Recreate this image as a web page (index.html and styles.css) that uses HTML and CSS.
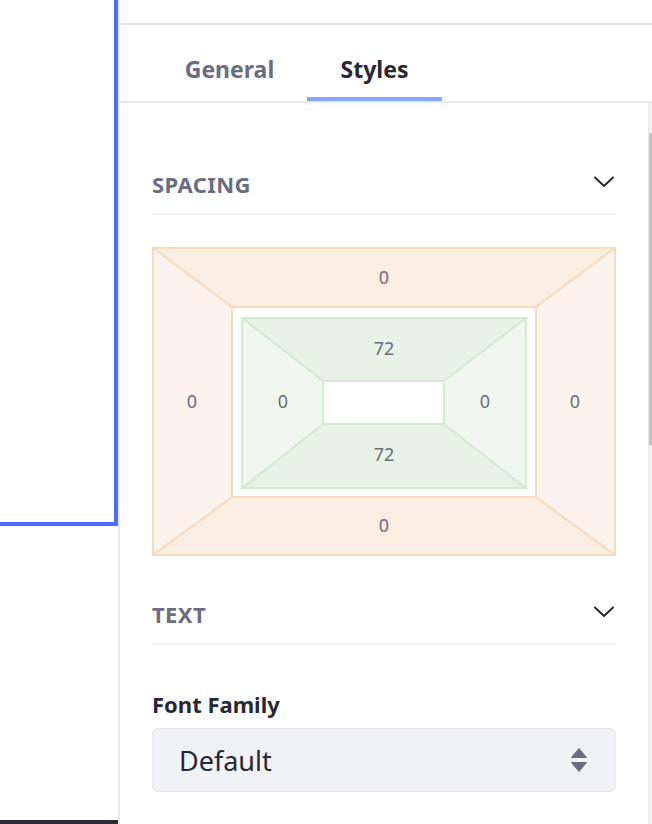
FILE: index.html
```html
<!DOCTYPE html>
<html lang="en">
  <head>
    <meta charset="UTF-8" />
    <meta name="viewport" content="width=device-width, initial-scale=1.0" />
    <title>Styles</title>
    <link rel="stylesheet" href="styles.css">
  </head>
  <body>
    <div class="page">
      <div class="canvas">
        <div class="selected-block"></div>
        <div class="canvas-bottom"></div>
      </div>
      <div class="sidebar">
        <div class="sidebar-top"></div>
        <div class="tabs">
          <div class="tab">General</div>
          <div class="tab active">Styles</div>
        </div>
        <div class="sidebar-body">
          <div class="content">
            <div class="section-head">
              <span>SPACING</span>
              <svg class="chevron" width="20" height="12" viewBox="0 0 20 12">
                <path d="M1 1.5 L10 10 L19 1.5" fill="none" stroke="#272833" stroke-width="2" stroke-linecap="round" stroke-linejoin="round"/>
              </svg>
            </div>

            <svg class="box-model" width="464" height="309" viewBox="0 0 464 309">
              <g stroke="#f4dcc1" stroke-width="2" stroke-linejoin="miter">
                <polygon points="1,1 463,1 384,60 80,60" fill="#faede1"/>
                <polygon points="1,308 463,308 384,250 80,250" fill="#faede1"/>
                <polygon points="1,1 80,60 80,250 1,308" fill="#fbf3ec"/>
                <polygon points="463,1 384,60 384,250 463,308" fill="#fbf3ec"/>
              </g>
              <g stroke="#d5ead3" stroke-width="2" stroke-linejoin="miter">
                <polygon points="90,71 374,71 292,134 171,134" fill="#e7f3e5"/>
                <polygon points="90,241 374,241 292,177 171,177" fill="#e7f3e5"/>
                <polygon points="90,71 171,134 171,177 90,241" fill="#f0f7ef"/>
                <polygon points="374,71 292,134 292,177 374,241" fill="#f0f7ef"/>
              </g>
              <g class="box-label" text-anchor="middle">
                <text x="232" y="37">0</text>
                <text x="232" y="108">72</text>
                <text x="40" y="161">0</text>
                <text x="131" y="161">0</text>
                <text x="333" y="161">0</text>
                <text x="423" y="161">0</text>
                <text x="232" y="214">72</text>
                <text x="232" y="285">0</text>
              </g>
            </svg>

            <div class="section-head text-head">
              <span>TEXT</span>
              <svg class="chevron" width="20" height="12" viewBox="0 0 20 12">
                <path d="M1 1.5 L10 10 L19 1.5" fill="none" stroke="#272833" stroke-width="2" stroke-linecap="round" stroke-linejoin="round"/>
              </svg>
            </div>

            <div class="field-label">Font Family</div>
            <div class="select">
              <span>Default</span>
              <svg width="16" height="24" viewBox="0 0 16 24">
                <path d="M8 0.5 L15.5 9.5 L0.5 9.5 Z" fill="#6b6c7e" stroke="#6b6c7e" stroke-linejoin="round"/>
                <path d="M8 23.5 L15.5 14.5 L0.5 14.5 Z" fill="#6b6c7e" stroke="#6b6c7e" stroke-linejoin="round"/>
              </svg>
            </div>
          </div>
          <div class="scrollbar">
            <div class="thumb"></div>
          </div>
        </div>
      </div>
    </div>
  </body>
</html>
```

FILE: styles.css
```css
body {
  margin: 0;
  font-family: "Noto Sans", "Open Sans", sans-serif;
  background: #fff;
  color: #272833;
}
.page {
  display: flex;
  width: 652px;
  height: 824px;
  overflow: hidden;
}
.canvas {
  width: 118px;
  flex-shrink: 0;
  display: flex;
  flex-direction: column;
  justify-content: space-between;
}
.selected-block {
  height: 522px;
  border-right: 4px solid #4b6bfb;
  border-bottom: 4px solid #4b6bfb;
}
.canvas-bottom {
  height: 4px;
  background: #2c2b36;
}
.sidebar {
  flex: 1;
  min-width: 0;
  border-left: 2px solid #e7e7ed;
  display: flex;
  flex-direction: column;
}
.sidebar-top {
  height: 23px;
  border-bottom: 2px solid #e7e7ed;
}
.tabs {
  display: flex;
  gap: 10px;
  height: 76px;
  padding-left: 42px;
  border-bottom: 2px solid #e7e7ed;
}
.tab {
  width: 135px;
  box-sizing: border-box;
  text-align: center;
  font-size: 23px;
  font-weight: 700;
  color: #6b6c7e;
  padding-top: 28px;
  border-bottom: 4px solid transparent;
}
.tab.active {
  color: #272833;
  border-bottom-color: #89a7f7;
}
.sidebar-body {
  flex: 1;
  display: flex;
}
.content {
  flex: 1;
  min-width: 0;
  padding: 0 32px;
}
.scrollbar {
  width: 4px;
  flex-shrink: 0;
  box-sizing: border-box;
  background: #f1f1f1;
  border-left: 1px solid #e8e8e8;
  padding-top: 30px;
}
.thumb {
  height: 312px;
  background: #c1c1c1;
}
.section-head {
  display: flex;
  justify-content: space-between;
  align-items: center;
  margin-top: 66px;
  height: 30px;
  padding-bottom: 14px;
  border-bottom: 2px solid #f1f2f5;
  font-size: 22px;
  font-weight: 700;
  letter-spacing: 0.4px;
  color: #6b6c7e;
}
.chevron {
  margin-right: 2px;
  margin-bottom: 4px;
}
.box-model {
  display: block;
  margin-top: 32px;
}
.box-label text {
  font-family: "Noto Sans", "Open Sans", sans-serif;
  font-size: 18px;
  fill: #6b6c7e;
}
.text-head {
  margin-top: 43px;
}
.field-label {
  margin-top: 45px;
  height: 28px;
  line-height: 28px;
  font-size: 22px;
  font-weight: 700;
  color: #272833;
}
.select {
  margin-top: 10px;
  height: 64px;
  box-sizing: border-box;
  border: 1px solid #e7e7ed;
  border-radius: 6px;
  background: #f1f2f5;
  display: flex;
  align-items: center;
  justify-content: space-between;
  padding: 0 28px 0 26px;
  font-size: 27px;
  color: #272833;
}
```
